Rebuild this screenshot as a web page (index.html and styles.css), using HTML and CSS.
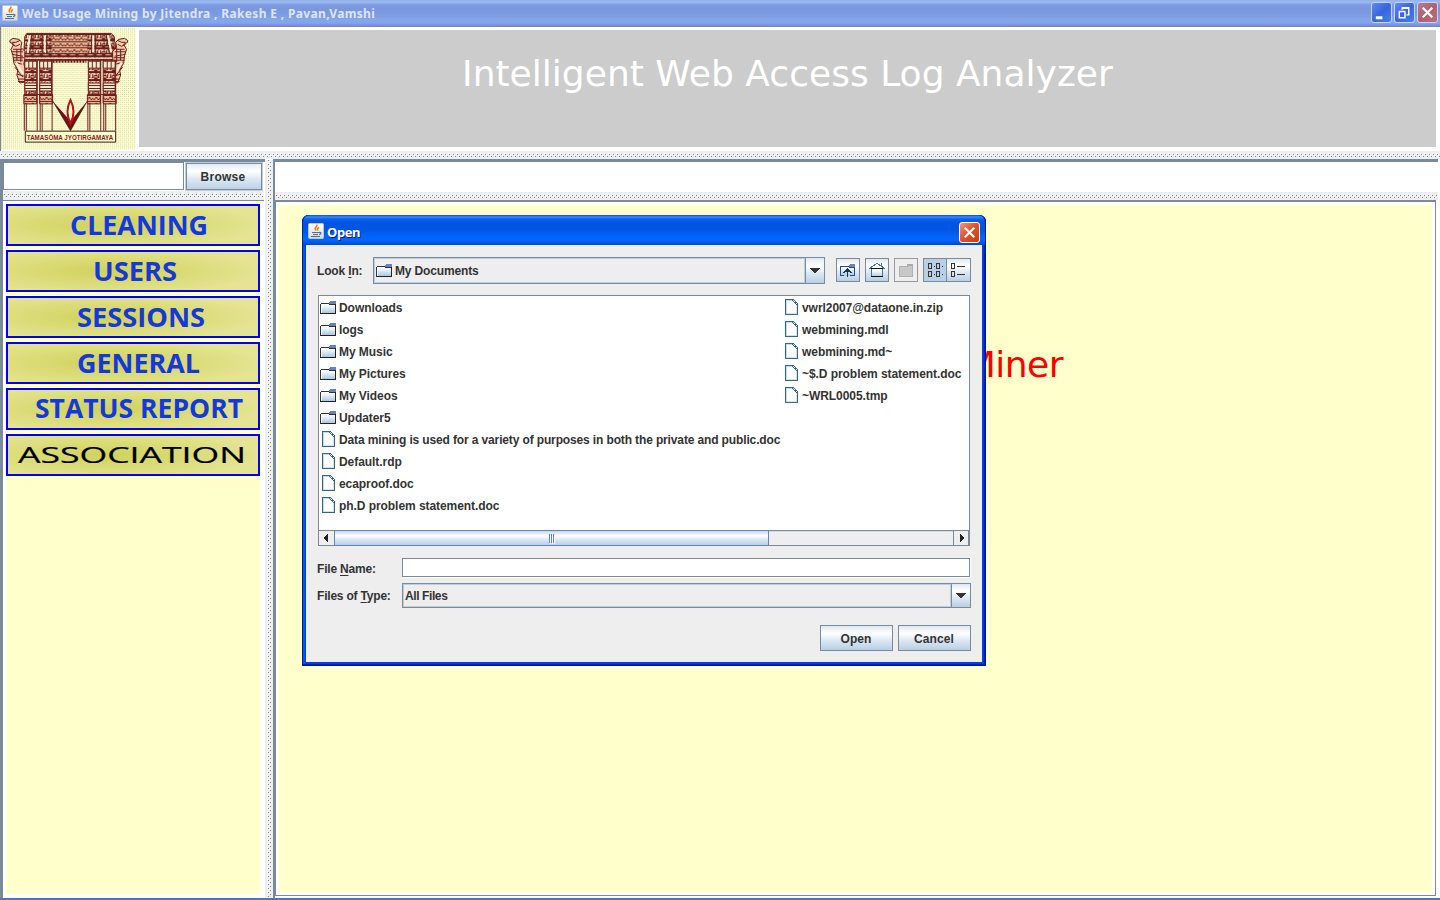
FILE: index.html
```html
<!DOCTYPE html>
<html lang="en">
<head>
<meta charset="utf-8">
<title>Web Usage Mining</title>
<link rel="stylesheet" href="styles.css">
</head>
<body>
<svg class="defs" width="0" height="0">
  <defs>
    <linearGradient id="fold" x1="0" y1="0" x2="0" y2="1"><stop offset="0" stop-color="#fff"/><stop offset=".35" stop-color="#eef4fa"/><stop offset="1" stop-color="#a9c8e2"/></linearGradient>
    <linearGradient id="jbg" x1="0" y1="0" x2="0" y2="1"><stop offset="0" stop-color="#fff"/><stop offset="1" stop-color="#d5dadf"/></linearGradient>
    <radialGradient id="gold" cx=".4" cy=".5" r=".62"><stop offset="0" stop-color="#d1d15c"/><stop offset=".45" stop-color="#d9da73"/><stop offset="1" stop-color="#e4e494"/></radialGradient>
    <pattern id="dither" width="4" height="4" patternUnits="userSpaceOnUse"><rect width="4" height="4" fill="#ffffcc"/><rect width="1" height="1" fill="#cfcfc0"/><rect x="2" y="2" width="1" height="1" fill="#cfcfc0"/><rect x="2" width="1" height="1" fill="#d6e8ba"/><rect y="2" width="1" height="1" fill="#e9d4ba"/></pattern>
    <pattern id="carve" width="9" height="8" patternUnits="userSpaceOnUse"><rect width="9" height="8" fill="#f0d6b4"/><path d="M0 .5h9M0 7.500h9M1.500 2v4M3 3.500h3v3H3zM7.500 2v4M4 2h2" fill="none" stroke="#6a1a17"/><path d="M0 5.500h1M6 5.500h1M8 1.500h1M3 5.500h2" stroke="#b04a40"/></pattern>
    <pattern id="carve2" width="7" height="6" patternUnits="userSpaceOnUse"><rect width="7" height="6" fill="#e6bb98"/><path d="M0 2l2 2 2-3 2 3 1-1M0 5.500h7" fill="none" stroke="#6a1411"/></pattern>
    <symbol id="java" viewBox="0 0 16 16"><rect x=".5" y=".5" width="15" height="15" rx="1" fill="url(#jbg)" stroke="#c3c3c3"/><path d="M8.500 1.500c2 2-2.500 2.500-1.200 5l.8 1M11 4.500c-2 1-2 1.500-1 3" fill="none" stroke="#f07d18" stroke-width="1.500"/><path d="M4 9.500h7M5 11.500h5M3 13.500h9M11 9.500c3-.5 2 2 0 2" fill="none" stroke="#4b6f94" stroke-width="1.200"/></symbol>
    <symbol id="folder" viewBox="0 0 16 13"><path d="M1 3h7l1-1h6v10H1z" fill="url(#fold)"/><path d="M1.500 11.500V3.500h7" fill="none" stroke="#fff"/><path d="M.5 12V3M1 2.500h8M9 3.500h6" fill="none" stroke="#333"/><path d="M0 12.500h16M15.500 2v11" fill="none" stroke="#222"/><path d="M10 0h6v3H9V1h1z" fill="#6382bf"/></symbol>
    <symbol id="file" viewBox="0 0 13 16"><path d="M1 1h8l3 4v10H1z" fill="#fff"/><path d="M1.500 15V1.500h7" fill="none" stroke="#c7dced"/><path d="M2 14.500h9.500V6" fill="none" stroke="#d4e3f0"/><path d="M.5 0v16M0 .5h9M0 15.500h13M12.500 5v11" fill="none" stroke="#2f6599"/><path d="M7 1l5 5M8 0l5 5M9 3h2" fill="none" stroke="#2f6599"/></symbol>
    <symbol id="down" viewBox="0 0 10 5"><path d="M0 0h10v1H9v1H8v1H7v1H6v1H4V4H3V3H2V2H1V1H0z" fill="#333"/></symbol>
  </defs>
</svg>

<div class="app">
  <header class="titlebar">
    <svg class="java" width="16" height="16"><use href="#java"/></svg>
    <span class="app-title">Web Usage Mining by Jitendra , Rakesh E , Pavan,Vamshi</span>
    <div class="win-buttons">
      <svg class="wb" viewBox="0 0 20 20"><path d="M4 14h7v3H4z" fill="#fff"/></svg>
      <svg class="wb" viewBox="0 0 20 20"><path d="M7.500 7V5M7 5h7.500v7.500H12M7 5.500h8M4.500 9v6.500h6V9M4 9h7" fill="none" stroke="#fff" stroke-width="1.500"/></svg>
      <svg class="wb wb-close" viewBox="0 0 20 20"><path d="M5 5l10 10M15 5L5 15" fill="none" stroke="#fff" stroke-width="2.300"/></svg>
    </div>
  </header>

  <section class="banner">
    <svg class="logo" width="136" height="123" viewBox="0 27 136 123">
      <rect y="27" width="136" height="123" fill="url(#dither)"/>
      <g stroke="#6d1e1b" stroke-width="1">
        <path d="M24 36l2-3h85l3 3 2 16 1 5-3 3H22l-2-3 3-4z" fill="url(#carve)"/>
        <path d="M25 45.500h87M23 53.500h91M26 34h85" stroke="#4f1210"/>
        <path d="M51 36h36v17H51z" fill="url(#carve2)" stroke="none"/>
        <path d="M29 35l-2 17M44 35v17M93 35v17M108 35l3 17" stroke="#fff0d8" stroke-width="2"/>
        <path d="M31 35l-2 18M42 35v18M46 35v18M91 35v18M95 35v18M106 35l3 18" fill="none"/>
        <path d="M21 56.500h95M24 59.500h90" fill="none"/><path d="M22 58h92" stroke="#ffe9d0"/>
        <path d="M52 61h34" stroke-width="3" stroke-dasharray="2 1"/>
      </g>
      <g id="figure" fill="#f0cfae" stroke="#6d1a17">
        <path d="M9 40l3-2 6 1 3 3-1 5 4 4v7l-1 6 2 6-1 12-5 1-3-8 1-5-4-7-1-8-2-6 3-5-4-2z"/>
        <path d="M11 42h4l4-2M11 44l4 2 4-2M12 49h9M11 51.500h11M11 54l11 2M12 57.500h11M12 60h10M14 62l7 2M14 67l8 10M16 74l7 2M17 79h7M17 81.500h7M16 49v11M20 48v14" fill="none"/>
        <path d="M15 62l7 12" stroke="#fff1d9" stroke-width="2"/>
      </g>
      <use href="#figure" transform="translate(136.500 0) scale(-1 1)"/>
      <g stroke="#6d1e1b">
        <g id="pillars">
          <path d="M24 60h12v43H24zM39 60h12v43H39z" fill="url(#carve)"/>
          <path d="M24 61h12v7H24zM39 61h12v7H39zM24 83h12v8H24zM39 83h12v8H39z" fill="#ffeccb"/>
          <path d="M23 95h13v9H23zM39 95h13v9H39z" fill="url(#carve2)"/>
          <path d="M28 61v7M32 61v7M43 61v7M47 61v7M24 85.500h12M39 85.500h12M24 88.500h12M39 88.500h12M23 94.500h29" fill="none"/>
          <path d="M23.500 104v27M36.500 60v71M39.500 104v27M41.500 104v27M51.500 60v71M25.500 104v27" fill="none"/>
        </g>
        <use href="#pillars" x="64"/>
      </g>
      <path d="M52 101l18 30 17-30-14 17-3 4-3-4z" fill="#720f10"/>
      <path d="M52 101l18 30 17-30" fill="none" stroke="#350b09" stroke-width=".6"/>
      <path d="M70 100q6 12 0 24-6-12 0-24z" fill="#ffffcc" stroke="#b91118" stroke-width="2"/>
      <path d="M24.500 131.500h91v11h-91z" fill="#ffffcc" stroke="#421513"/>
      <text x="26" y="140" class="motto" textLength="87" lengthAdjust="spacingAndGlyphs">TAMASŌMA JYOTIRGAMAYA</text>
    </svg>
    <h1 class="headline">Intelligent Web Access Log Analyzer</h1>
  </section>
  <div class="split-h"></div>

  <main class="body">
    <aside class="left">
      <div class="browse-row"><div class="path-field"></div><div class="browse">Browse</div></div>
      <div class="split-h split-left"></div>
      <nav class="menu">
        <svg class="item" viewBox="0 0 250 38"><rect width="250" height="38" fill="url(#gold)"/><text x="62" y="29" textLength="138" lengthAdjust="spacingAndGlyphs">CLEANING</text></svg>
        <svg class="item" viewBox="0 0 250 38"><rect width="250" height="38" fill="url(#gold)"/><text x="85" y="29" textLength="84" lengthAdjust="spacingAndGlyphs">USERS</text></svg>
        <svg class="item" viewBox="0 0 250 38"><rect width="250" height="38" fill="url(#gold)"/><text x="69" y="29" textLength="128" lengthAdjust="spacingAndGlyphs">SESSIONS</text></svg>
        <svg class="item" viewBox="0 0 250 38"><rect width="250" height="38" fill="url(#gold)"/><text x="69" y="29" textLength="123" lengthAdjust="spacingAndGlyphs">GENERAL</text></svg>
        <svg class="item" viewBox="0 0 250 38"><rect width="250" height="38" fill="url(#gold)"/><text x="27" y="28" textLength="208" lengthAdjust="spacingAndGlyphs">STATUS REPORT</text></svg>
        <svg class="item" viewBox="0 0 250 38"><rect width="250" height="38" fill="url(#gold)"/><text class="assoc" x="10" y="27" textLength="228" lengthAdjust="spacingAndGlyphs">ASSOCIATION</text></svg>
      </nav>
    </aside>
    <div class="split-v"></div>
    <section class="right">
      <div class="right-top"></div>
      <div class="split-h split-right"></div>
      <div class="stage"><div class="canvas"><div class="miner">Miner</div></div></div>
    </section>
  </main>
  <footer class="taskbar-edge"></footer>
</div>

<div class="dialog">
  <div class="dlg-title">
    <svg class="java" width="16" height="16"><use href="#java"/></svg>
    <span>Open</span>
    <svg class="dlg-close" viewBox="0 0 20 20"><path d="M5 5l10 10M15 5L5 15" fill="none" stroke="#fff" stroke-width="2.300"/></svg>
  </div>
  <div class="dlg-body">
    <div class="lookin">
      <label class="lab">Look <u>I</u>n:</label>
      <div class="combo look-combo"><div class="combo-val"><svg class="px" width="16" height="13"><use href="#folder"/></svg><span>My Documents</span></div><div class="combo-btn"><svg class="px" width="10" height="5"><use href="#down"/></svg></div></div>
      <div class="tool"><svg class="px" viewBox="0 0 22 22"><path d="M3 8h8v-2h6v11H3z" fill="url(#fold)"/><path d="M3.500 17V7.500h8M12 8.500h5.500V17M3 16.500h4M13 16.500h5" fill="none" stroke="#2c4f75"/><path d="M13 5h5v3h-6V6h1z" fill="#6382bf"/><path d="M10.500 18v-7M6.500 14l4-4 4 4M8.500 12.500h4" fill="none" stroke="#17365c"/></svg></div>
      <div class="tool"><svg class="px" viewBox="0 0 22 22"><path d="M5 10h12v8H5z" fill="url(#fold)"/><path d="M3 9.500l8-5 8 5M15.500 4v4M5.500 10v7M16.500 10v7M3 9.500h3M16 9.500h3" fill="none" stroke="#3f75a8"/><path d="M5 9.500h12M5 17.500h12" stroke="#111"/></svg></div>
      <div class="tool disabled"><svg class="px" viewBox="0 0 22 22"><path d="M4 7h8l1-2h5v12H4z" fill="#c8c8c8"/><path d="M4.500 17V7.500h8M17.500 7v10H4" fill="none" stroke="#b0b0b0"/><path d="M12 5h6v2h-6z" fill="#aaa"/></svg></div>
      <div class="tool on"><svg class="px" viewBox="0 0 22 22"><path d="M4.500 4.500h3v5h-3zM12.500 4.500h3v5h-3zM4.500 12.500h3v5h-3zM12.500 12.500h3v5h-3zM10 7.500h1M18 7.500h1M10 15.500h1M18 15.500h1" fill="none" stroke="#333"/></svg></div>
      <div class="tool last"><svg class="px" viewBox="0 0 22 22"><path d="M4.500 4.500h3v5h-3zM4.500 12.500h3v5h-3zM10 7.500h8M10 15.500h8" fill="none" stroke="#333"/></svg></div>
    </div>
    <div class="list">
      <div class="cols">
        <ul class="col col-a">
          <li><svg class="px fo" width="16" height="13"><use href="#folder"/></svg><span>Downloads</span></li>
          <li><svg class="px fo" width="16" height="13"><use href="#folder"/></svg><span>logs</span></li>
          <li><svg class="px fo" width="16" height="13"><use href="#folder"/></svg><span>My Music</span></li>
          <li><svg class="px fo" width="16" height="13"><use href="#folder"/></svg><span>My Pictures</span></li>
          <li><svg class="px fo" width="16" height="13"><use href="#folder"/></svg><span>My Videos</span></li>
          <li><svg class="px fo" width="16" height="13"><use href="#folder"/></svg><span>Updater5</span></li>
          <li class="long"><svg class="px fi" width="13" height="16"><use href="#file"/></svg><span>Data mining is used for a variety of purposes in both the private and public.doc</span></li>
          <li><svg class="px fi" width="13" height="16"><use href="#file"/></svg><span>Default.rdp</span></li>
          <li><svg class="px fi" width="13" height="16"><use href="#file"/></svg><span>ecaproof.doc</span></li>
          <li><svg class="px fi" width="13" height="16"><use href="#file"/></svg><span>ph.D problem statement.doc</span></li>
        </ul>
        <ul class="col col-b">
          <li><svg class="px fi" width="13" height="16"><use href="#file"/></svg><span>vwrl2007@dataone.in.zip</span></li>
          <li><svg class="px fi" width="13" height="16"><use href="#file"/></svg><span>webmining.mdl</span></li>
          <li><svg class="px fi" width="13" height="16"><use href="#file"/></svg><span>webmining.md~</span></li>
          <li><svg class="px fi" width="13" height="16"><use href="#file"/></svg><span>~$.D problem statement.doc</span></li>
          <li><svg class="px fi" width="13" height="16"><use href="#file"/></svg><span>~WRL0005.tmp</span></li>
        </ul>
      </div>
      <div class="scroll">
        <div class="sb-btn"><svg class="px" width="5" height="8" viewBox="0 0 5 8"><path d="M4 0v8H3V7H2V6H1V5H0V3h1V2h1V1h1V0z" fill="#222"/></svg></div>
        <div class="thumb"><i></i><i></i><i></i></div>
        <div class="track"></div>
        <div class="sb-btn sb-right"><svg class="px" width="4" height="8" viewBox="0 0 4 8"><path d="M0 0v8h1V7h1V6h1V5h1V3H3V2H2V1H1V0z" fill="#222"/></svg></div>
      </div>
    </div>
    <div class="field-row name-row"><label class="lab">File <u>N</u>ame:</label><div class="input"></div></div>
    <div class="field-row type-row"><label class="lab">Files of <u>T</u>ype:</label><div class="combo type-combo"><div class="combo-val">All Files</div><div class="combo-btn"><svg class="px" width="10" height="5"><use href="#down"/></svg></div></div></div>
    <div class="actions"><div class="btn">Open</div><div class="btn">Cancel</div></div>
  </div>
</div>
</body>
</html>
```

FILE: styles.css
```css
* { box-sizing: border-box; }
body { margin: 0; width: 1440px; height: 900px; overflow: hidden; background: #fff; color: #333; font: bold 12px/16px "Liberation Sans", Arial, sans-serif; letter-spacing: -.06px; }
ul { list-style: none; margin: 0; padding: 0; }
svg { display: block; flex: none; }
.defs { position: absolute; }
.px { shape-rendering: crispEdges; }
u { text-decoration-thickness: 1px; text-underline-offset: 2px; }

.app { display: flex; flex-direction: column; width: 1440px; height: 900px; }

.titlebar { display: flex; align-items: center; height: 27px; padding: 0 2px 1px 2px; border-bottom: 1px solid #7a8aa8; background: linear-gradient(#8fb0ee 0, #9cbcf0 2px, #7c9ae2 5px, #7a96df 9px, #7b9ae3 14px, #83a7ec 20px, #83a5ea 23px, #7588dc 26px); }
.app-title { margin: 2px 0 0 4px; font: bold 12px/16px "Noto Sans", sans-serif; letter-spacing: .34px; color: #dbe5fb; white-space: pre; }
.win-buttons { display: flex; gap: 2px; margin-left: auto; padding-right: 0; }
.wb { width: 21px; height: 21px; border: 1px solid #c5d4f5; border-radius: 3px; background: linear-gradient(135deg, #5f8af0, #3865df 50%, #4581f2); }
.wb-close { background: linear-gradient(135deg, #bd7a8c, #b0606d 50%, #b9707c); }

.banner { display: flex; height: 124px; padding-left: 0; background: #fff; border-left: 1px solid #7a8a99; }
.logo { width: 135px; height: 123px; shape-rendering: auto; }
.motto { font: bold 7px "Liberation Sans", sans-serif; fill: #8c201c; letter-spacing: 0; }
.headline { width: 1297px; height: 117px; margin: 3px 0 0 3px; padding: 21px 0 0 323px; background: #ccc; color: #fff; font: 36px/45px "DejaVu Sans", Verdana, sans-serif; letter-spacing: .02px; white-space: nowrap; }

.split-h { height: 8px; flex: none; background:
  linear-gradient(90deg, #7a8a99 1px, transparent 1px) 5px 3px / 4px 1px repeat-x,
  linear-gradient(90deg, #7a8a99 1px, transparent 1px) 7px 5px / 4px 1px repeat-x,
  linear-gradient(90deg, #fff 1px, transparent 1px) 4px 2px / 4px 1px repeat-x,
  linear-gradient(90deg, #fff 1px, transparent 1px) 6px 4px / 4px 1px repeat-x, #eee; }
.body { display: flex; height: 739px; }
.left { display: flex; flex-direction: column; width: 265px; background: #fff; border-top: 3px solid #7a8a99; border-left: 3px solid #7a8a99; }
.browse-row { display: flex; height: 29px; }
.path-field { width: 181px; height: 28px; margin: 0 1px 0 0; border: 1px solid #7a8a99; }
.browse { width: 78px; height: 29px; border: 1px solid #b8cfe5; outline: 1px solid #7a8a99; outline-offset: -2px; background: linear-gradient(#dde8f3, #fff 30%, #dde8f3 60%, #b8cfe5); padding: 0 2px 0 0; text-align: center; line-height: 28px; letter-spacing: .25px; }
.split-left { height: 10px; width: 261px; border-bottom: 1px solid #7a8a99; }
.menu { display: flex; flex-direction: column; gap: 4px; width: 254px; height: 693px; margin-left: 3px; padding-top: 3px; background: #ffc; background-clip: content-box; border-bottom: 0; }
.item { width: 254px; height: 42px; border: 2px solid #00f; }
.item text { font: 700 27px "Open Sans", "Noto Sans", sans-serif; fill: #1538d8; letter-spacing: 0; }
.item .assoc { font: 400 21px "Open Sans", "Noto Sans", sans-serif; fill: #000; stroke: #000; stroke-width: .2; }

.split-v { width: 8px; margin-top: 1px; background:
  linear-gradient(#7a8a99 1px, transparent 1px) 3px 4px / 1px 4px repeat-y,
  linear-gradient(#7a8a99 1px, transparent 1px) 5px 6px / 1px 4px repeat-y,
  linear-gradient(#fff 1px, transparent 1px) 2px 3px / 1px 4px repeat-y,
  linear-gradient(#fff 1px, transparent 1px) 4px 5px / 1px 4px repeat-y, #eee; }
.right { display: flex; flex-direction: column; width: 1165px; border-top: 3px solid #7a8a99; border-left: 2px solid #7a8a99; }
.right-top { height: 30px; }
.split-right { height: 8px; }
.stage { height: 696px; margin-right: 2px; padding: 3px; border: solid #7a8a99; border-width: 2px 1px 1px 1px; }
.canvas { height: 687px; width: 1153px; background: #ffc; padding: 137px 0 0 0; }
.miner { width: 784px; text-align: right; font: 36px/45px "DejaVu Sans", Verdana, sans-serif; letter-spacing: -.5px; color: #f00; }
.taskbar-edge { height: 2px; background: #4179cc; }

.dialog { position: absolute; left: 302px; top: 215px; width: 684px; height: 451px; border-radius: 7px 7px 0 0; background: #0040e0; box-shadow: inset 1px 0 #0018a8, inset -1px -1px #00148a, inset -2px -2px #0024b4, inset 3px 0 #0a52ea; padding: 0 4px 4px; }
.dlg-title { display: flex; align-items: center; height: 30px; margin: 0 -4px; padding: 1px 6px 0 6px; border-radius: 7px 7px 0 0; background: linear-gradient(#0a4fcf 0, #3a8cf8 2px, #0b62ee 4px, #0054e3 8px, #0055e5 15px, #0064fb 21px, #0066ff 25px, #0048d0 30px); box-shadow: inset 1px 0 #0020b0, inset -1px 0 #00148a; color: #fff; font: bold 13px/18px "Noto Sans", sans-serif; letter-spacing: -.4px; text-shadow: 1px 1px #0a1883; }
.dlg-title span { margin: 3px 0 0 3px; }
.dlg-close { width: 21px; height: 21px; margin: 3px 0 0 auto; border: 1px solid #fff; border-radius: 3px; background: linear-gradient(135deg, #f0987c, #e2532d 45%, #c93c12); }
.dlg-body { height: 417px; background: #eee; padding: 12px 11px 0 12px; }
.lookin { display: flex; align-items: flex-start; height: 38px; }
.lab { white-space: pre; flex: none; margin-left: -1px; letter-spacing: -.15px; }
.lookin .lab { width: 56px; padding-top: 6px; }
.combo { display: flex; border: 1px solid #7a8a99; letter-spacing: -.15px; }
.combo-val { display: flex; align-items: center; flex: 1; border: 1px solid #b8cfe5; padding-left: 1px; }
.type-combo .combo-val { letter-spacing: -.4px; }
.look-combo { width: 452px; height: 27px; margin-right: 11px; }
.look-combo span { margin-left: 3px; }
.combo-btn { display: grid; place-items: center; width: 19px; border-left: 1px solid #7a8a99; background: linear-gradient(#dde8f3, #fff 30%, #dde8f3 60%, #b8cfe5); }
.tool { width: 24px; height: 24px; margin: 1px 5px 0 0; border: 1px solid #7a8a99; background: linear-gradient(#dde8f3, #fff 30%, #dde8f3 60%, #b8cfe5); }
.tool svg { width: 22px; height: 22px; }
.disabled { background: #eee; border-color: #999; }
.on { margin-right: 0; background: #b8cfe5; }
.last { margin-right: 0; border-left: 0; }
.list { display: flex; flex-direction: column; width: 652px; height: 251px; border: 1px solid #7a8a99; border-bottom: 0; background: #fff; }
.cols { display: flex; height: 234px; padding: 1px 0 0 1px; }
.col-a { width: 463px; flex: none; }
.col li { display: flex; align-items: center; height: 22px; white-space: pre; }
.col .long { letter-spacing: -.135px; }
.col .fo { margin: -1px 3px 0 0; }
.col .fi { margin: -2px 4px 0 2px; }
.scroll { display: flex; height: 16px; border: solid #7a8a99; border-width: 1px 0; background: #eee; }
.sb-btn { display: grid; place-items: center; width: 15px; }
.thumb { display: flex; gap: 1px; align-items: center; justify-content: center; width: 435px; margin: -1px 0; border: 1px solid #6382bf; background: linear-gradient(#c5d8eb, #fff 35%, #dde8f3 60%, #b8cfe5); }
.thumb i { width: 1px; height: 9px; background: #6382bf; box-shadow: 1px 1px #fff; }
.track { flex: 1; border-top: 1px solid #d4dde6; }
.sb-right { width: 16px; padding-left: 1px; border: solid #7a8a99; border-width: 0 1px; }
.field-row { display: flex; }
.name-row { margin-top: 12px; height: 25px; }
.name-row .lab, .type-row .lab { width: 85px; padding-top: 3px; letter-spacing: -.2px; }
.input { width: 568px; height: 19px; border: 1px solid #7a8a99; background: #fff; box-shadow: 1px 1px #fff; }
.type-row .lab { padding-top: 5px; }
.type-combo { width: 569px; height: 25px; }
.actions { display: flex; justify-content: flex-end; gap: 5px; margin-top: 17px; }
.btn { width: 73px; height: 26px; border: 1px solid #7a8a99; background: linear-gradient(#dde8f3, #fff 30%, #dde8f3 60%, #b8cfe5); padding-right: 1px; text-align: center; line-height: 26px; letter-spacing: .1px; }
```
